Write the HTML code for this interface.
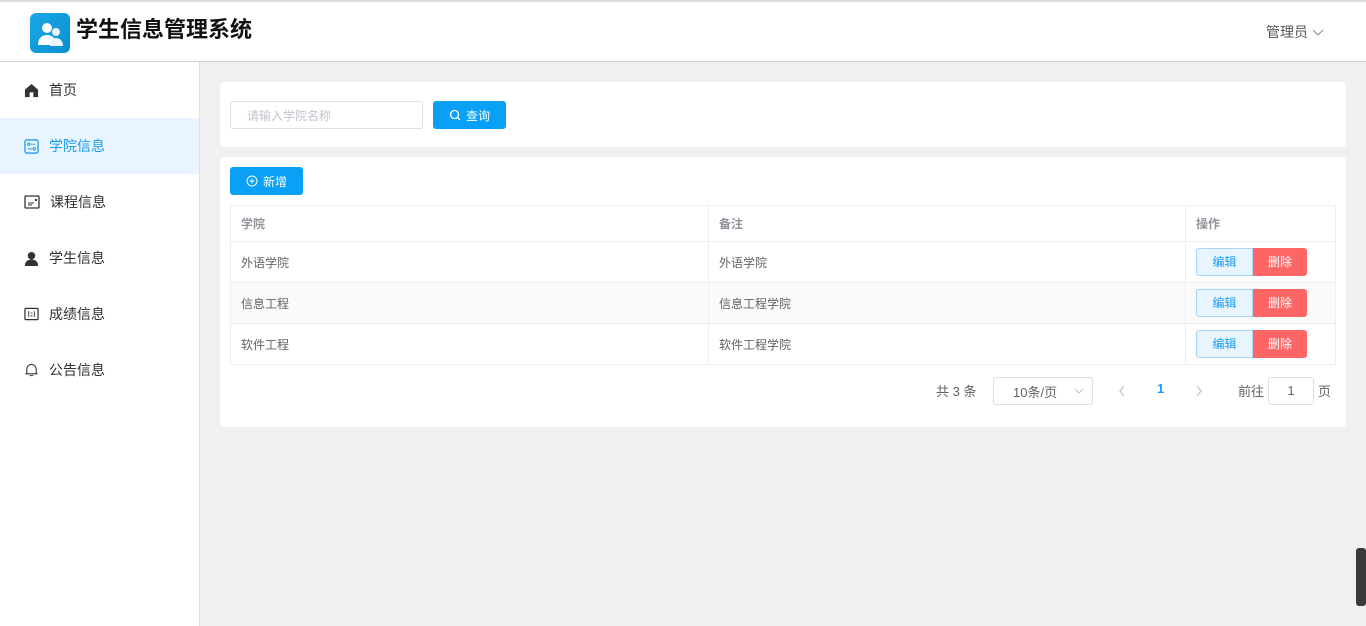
<!DOCTYPE html>
<html><head><meta charset="utf-8"><style>
*{box-sizing:border-box;margin:0;padding:0}
body{width:1366px;height:626px;overflow:hidden;background:#f0f0f0;font-family:"Liberation Sans","Noto Sans CJK SC",sans-serif;font-size:13px;color:#606266;position:relative}
.hdr{position:absolute;left:0;top:0;width:1366px;height:62px;background:#fff;border-top:2px solid #ddd;border-bottom:1px solid #d0d0d0}
.logo{position:absolute;left:30px;top:11px;width:40px;height:40px;border-radius:6px;background:linear-gradient(135deg,#1aa8e6,#0a8fd0)}
.title{position:absolute;left:76px;top:13px;font-size:22px;font-weight:bold;color:#111;line-height:30px}
.user{position:absolute;left:1266px;top:20px;font-size:14px;color:#555}
.side{position:absolute;left:0;top:62px;width:200px;height:564px;background:#fff;border-right:1px solid #e0e0e0}
.mi{height:56px;display:flex;align-items:center;padding-left:24px;font-size:14px;color:#303133}
.mi svg{margin-right:10px}
.mi.act{background:#e8f4ff;color:#1a9df0}
.card{position:absolute;left:220px;width:1126px;background:#fff;border-radius:4px}
.inp{position:absolute;left:10px;top:19px;width:193px;height:28px;border:1px solid #dcdfe6;border-radius:3px;color:#c0c4cc;font-size:12px;padding:5px 16px}
.btn{position:absolute;background:#0aa0f5;color:#fff;border-radius:3px;font-size:12px;display:flex;align-items:center;justify-content:center;gap:5px}
table{position:absolute;left:10px;top:48px;width:1106px;border-collapse:collapse;font-size:12px}
td{border:1px solid #ebeef5;padding:0 10px;height:41px;color:#606266}
tr.h td{height:36px;color:#909399;font-weight:bold}
tr.s td{background:#fafafa}
.e{display:inline-block;width:57px;height:28px;line-height:26px;text-align:center;border:1px solid #a3d5fb;background:#e8f5ff;color:#1a9df0;border-radius:3px 0 0 3px;vertical-align:middle}
.d{display:inline-block;width:54px;height:28px;line-height:28px;text-align:center;background:#fe6565;color:#fff;border-radius:0 3px 3px 0;vertical-align:middle}
.pg{position:absolute;font-size:13px;color:#606266}
</style></head><body>
<div class="hdr">
<div class="logo"><svg width="40" height="40" viewBox="0 0 40 40"><circle cx="17" cy="15" r="5" fill="#fff"/><path d="M8 32c0-7 4-10 9-10s9 3 9 10z" fill="#fff"/><circle cx="26" cy="19" r="4" fill="#e8f4fb"/><path d="M20 33c0-6 3-8 6-8s7 2 7 8z" fill="#e8f4fb"/></svg></div>
<div class="title">学生信息管理系统</div>
<div class="user">管理员 <svg width="12" height="8" viewBox="0 0 12 8"><path d="M1 1l5 5 5-5" stroke="#888" fill="none"/></svg></div>
</div>
<div class="side">
<div class="mi"><svg width="15" height="15" viewBox="0 0 16 16"><path d="M1 7L8 1l7 6v8h-5v-5H6v5H1z" fill="#333"/></svg>首页</div>
<div class="mi act"><svg width="15" height="15" viewBox="0 0 16 16"><rect x="1" y="1" width="14" height="14" rx="2" fill="none" stroke="#1a9df0" stroke-width="1.4"/><circle cx="5" cy="5.5" r="1.3" fill="none" stroke="#1a9df0"/><path d="M7 5.5h5M4 10.5h5" stroke="#1a9df0"/><circle cx="11" cy="10.5" r="1.3" fill="none" stroke="#1a9df0"/></svg>学院信息</div>
<div class="mi"><svg width="16" height="14" viewBox="0 0 16 14"><rect x="1" y="1" width="14" height="12" rx="1" fill="none" stroke="#333" stroke-width="1.3"/><path d="M4 8h6M4 10h4" stroke="#333"/><rect x="11" y="4" width="2" height="2" fill="#333"/></svg>课程信息</div>
<div class="mi"><svg width="15" height="15" viewBox="0 0 16 16"><circle cx="8" cy="5" r="4" fill="#333"/><path d="M1 16c0-5 3-7 7-7s7 2 7 7z" fill="#333"/></svg>学生信息</div>
<div class="mi"><svg width="15" height="14" viewBox="0 0 16 14"><rect x="1" y="1" width="14" height="12" rx="1" fill="none" stroke="#333" stroke-width="1.3"/><path d="M5 4v6M11 4v6M7 6h2M7 9h2" stroke="#333"/></svg>成绩信息</div>
<div class="mi"><svg width="15" height="16" viewBox="0 0 16 16"><path d="M3 12V7a5 5 0 0 1 10 0v5h1.5H1.5z" fill="none" stroke="#333" stroke-width="1.2"/><path d="M6 14h4" stroke="#333"/></svg>公告信息</div>
</div>
<div class="card" style="top:82px;height:65px">
<div class="inp">请输入学院名称</div>
<div class="btn" style="left:213px;top:19px;width:73px;height:28px"><svg width="12" height="12" viewBox="0 0 12 12"><circle cx="5.5" cy="5.5" r="4" fill="none" stroke="#fff" stroke-width="1.3"/><path d="M8.5 8.5l2.5 2.5" stroke="#fff" stroke-width="1.3"/></svg>查询</div>
</div>
<div class="card" style="top:157px;height:270px">
<div class="btn" style="left:10px;top:10px;width:73px;height:28px"><svg width="12" height="12" viewBox="0 0 12 12"><circle cx="6" cy="6" r="5" fill="none" stroke="#fff"/><path d="M6 3.5v5M3.5 6h5" stroke="#fff"/></svg>新增</div>
<table>
<tr class="h"><td style="width:478px">学院</td><td style="width:477px">备注</td><td>操作</td></tr>
<tr><td>外语学院</td><td>外语学院</td><td><span class="e">编辑</span><span class="d">删除</span></td></tr>
<tr class="s"><td>信息工程</td><td>信息工程学院</td><td><span class="e">编辑</span><span class="d">删除</span></td></tr>
<tr><td>软件工程</td><td>软件工程学院</td><td><span class="e">编辑</span><span class="d">删除</span></td></tr>
</table>
<div class="pg" style="left:716px;top:224px">共 3 条</div>
<div style="position:absolute;left:773px;top:220px;width:100px;height:28px;border:1px solid #dcdfe6;border-radius:3px;padding:4px 19px;font-size:13px">10条/页<svg style="position:absolute;right:8px;top:10px" width="10" height="6" viewBox="0 0 10 6"><path d="M1 1l4 4 4-4" stroke="#c0c4cc" fill="none"/></svg></div>
<svg style="position:absolute;left:898px;top:228px" width="8" height="12" viewBox="0 0 8 12"><path d="M6 1L2 6l4 5" stroke="#c0c4cc" stroke-width="1.3" fill="none"/></svg>
<div class="pg" style="left:937px;top:224px;color:#1a9df0;font-weight:bold">1</div>
<svg style="position:absolute;left:975px;top:228px" width="8" height="12" viewBox="0 0 8 12"><path d="M2 1l4 5-4 5" stroke="#c0c4cc" stroke-width="1.3" fill="none"/></svg>
<div class="pg" style="left:1018px;top:224px">前往</div>
<div style="position:absolute;left:1048px;top:220px;width:46px;height:28px;border:1px solid #dcdfe6;border-radius:3px;text-align:center;line-height:26px">1</div>
<div class="pg" style="left:1098px;top:224px">页</div>
</div>
<div style="position:absolute;left:1356px;top:548px;width:10px;height:58px;background:#3a3a3a;border-radius:3px"></div>
</body></html>
